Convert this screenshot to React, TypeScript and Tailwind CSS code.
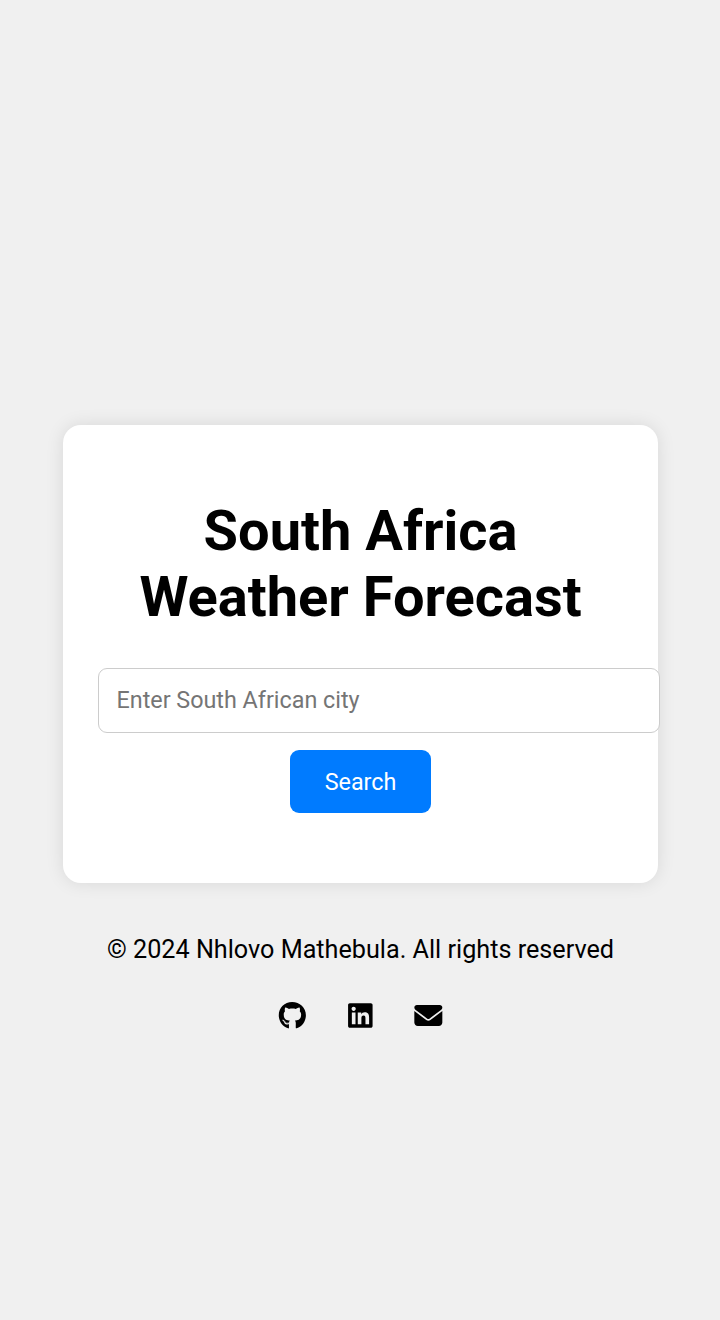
import { FaGithub, FaLinkedin, FaEnvelope } from "react-icons/fa6";

const links = [
  { label: "GitHub", Icon: FaGithub },
  { label: "LinkedIn", Icon: FaLinkedin },
  { label: "Email", Icon: FaEnvelope },
];

export default function App() {
  return (
    <div className="flex min-h-screen flex-col items-center bg-[#f0f0f0] pt-[425px] font-['Roboto',sans-serif] text-black">
      <main className="h-[458px] w-[595px] rounded-[18px] bg-white px-[35px] pt-[73px] text-center shadow-[0_0_18px_rgba(0,0,0,0.1)]">
        <h1 className="pl-px text-[56px] leading-[66px] font-bold">
          South Africa
          <br />
          Weather Forecast
        </h1>
        <form className="mt-[38px]" onSubmit={(e) => e.preventDefault()}>
          <input
            type="text"
            placeholder="Enter South African city"
            className="block h-[65px] w-[562px] rounded-[9px] border border-[#ccc] bg-white pr-[17px] pb-[2px] pl-[18px] text-[23.33px] placeholder:text-[#757575]"
          />
          <button className="mt-[17px] h-[63px] w-[141px] rounded-[9px] bg-[#007bff] pt-[2px] pl-px text-[23.33px] text-white">
            Search
          </button>
        </form>
      </main>
      <footer className="mt-[52px] text-center">
        <p className="pl-px text-[25.2px] leading-[30px]">© 2024 Nhlovo Mathebula. All rights reserved</p>
        <div className="mt-[36px] flex justify-center gap-[40px]">
          {links.map(({ label, Icon }) => (
            <a key={label} href="#" aria-label={label}>
              <Icon className="size-[28px] overflow-visible [&>path]:translate-x-[6px] [&>path]:translate-y-[9px]" />
            </a>
          ))}
        </div>
      </footer>
    </div>
  );
}
